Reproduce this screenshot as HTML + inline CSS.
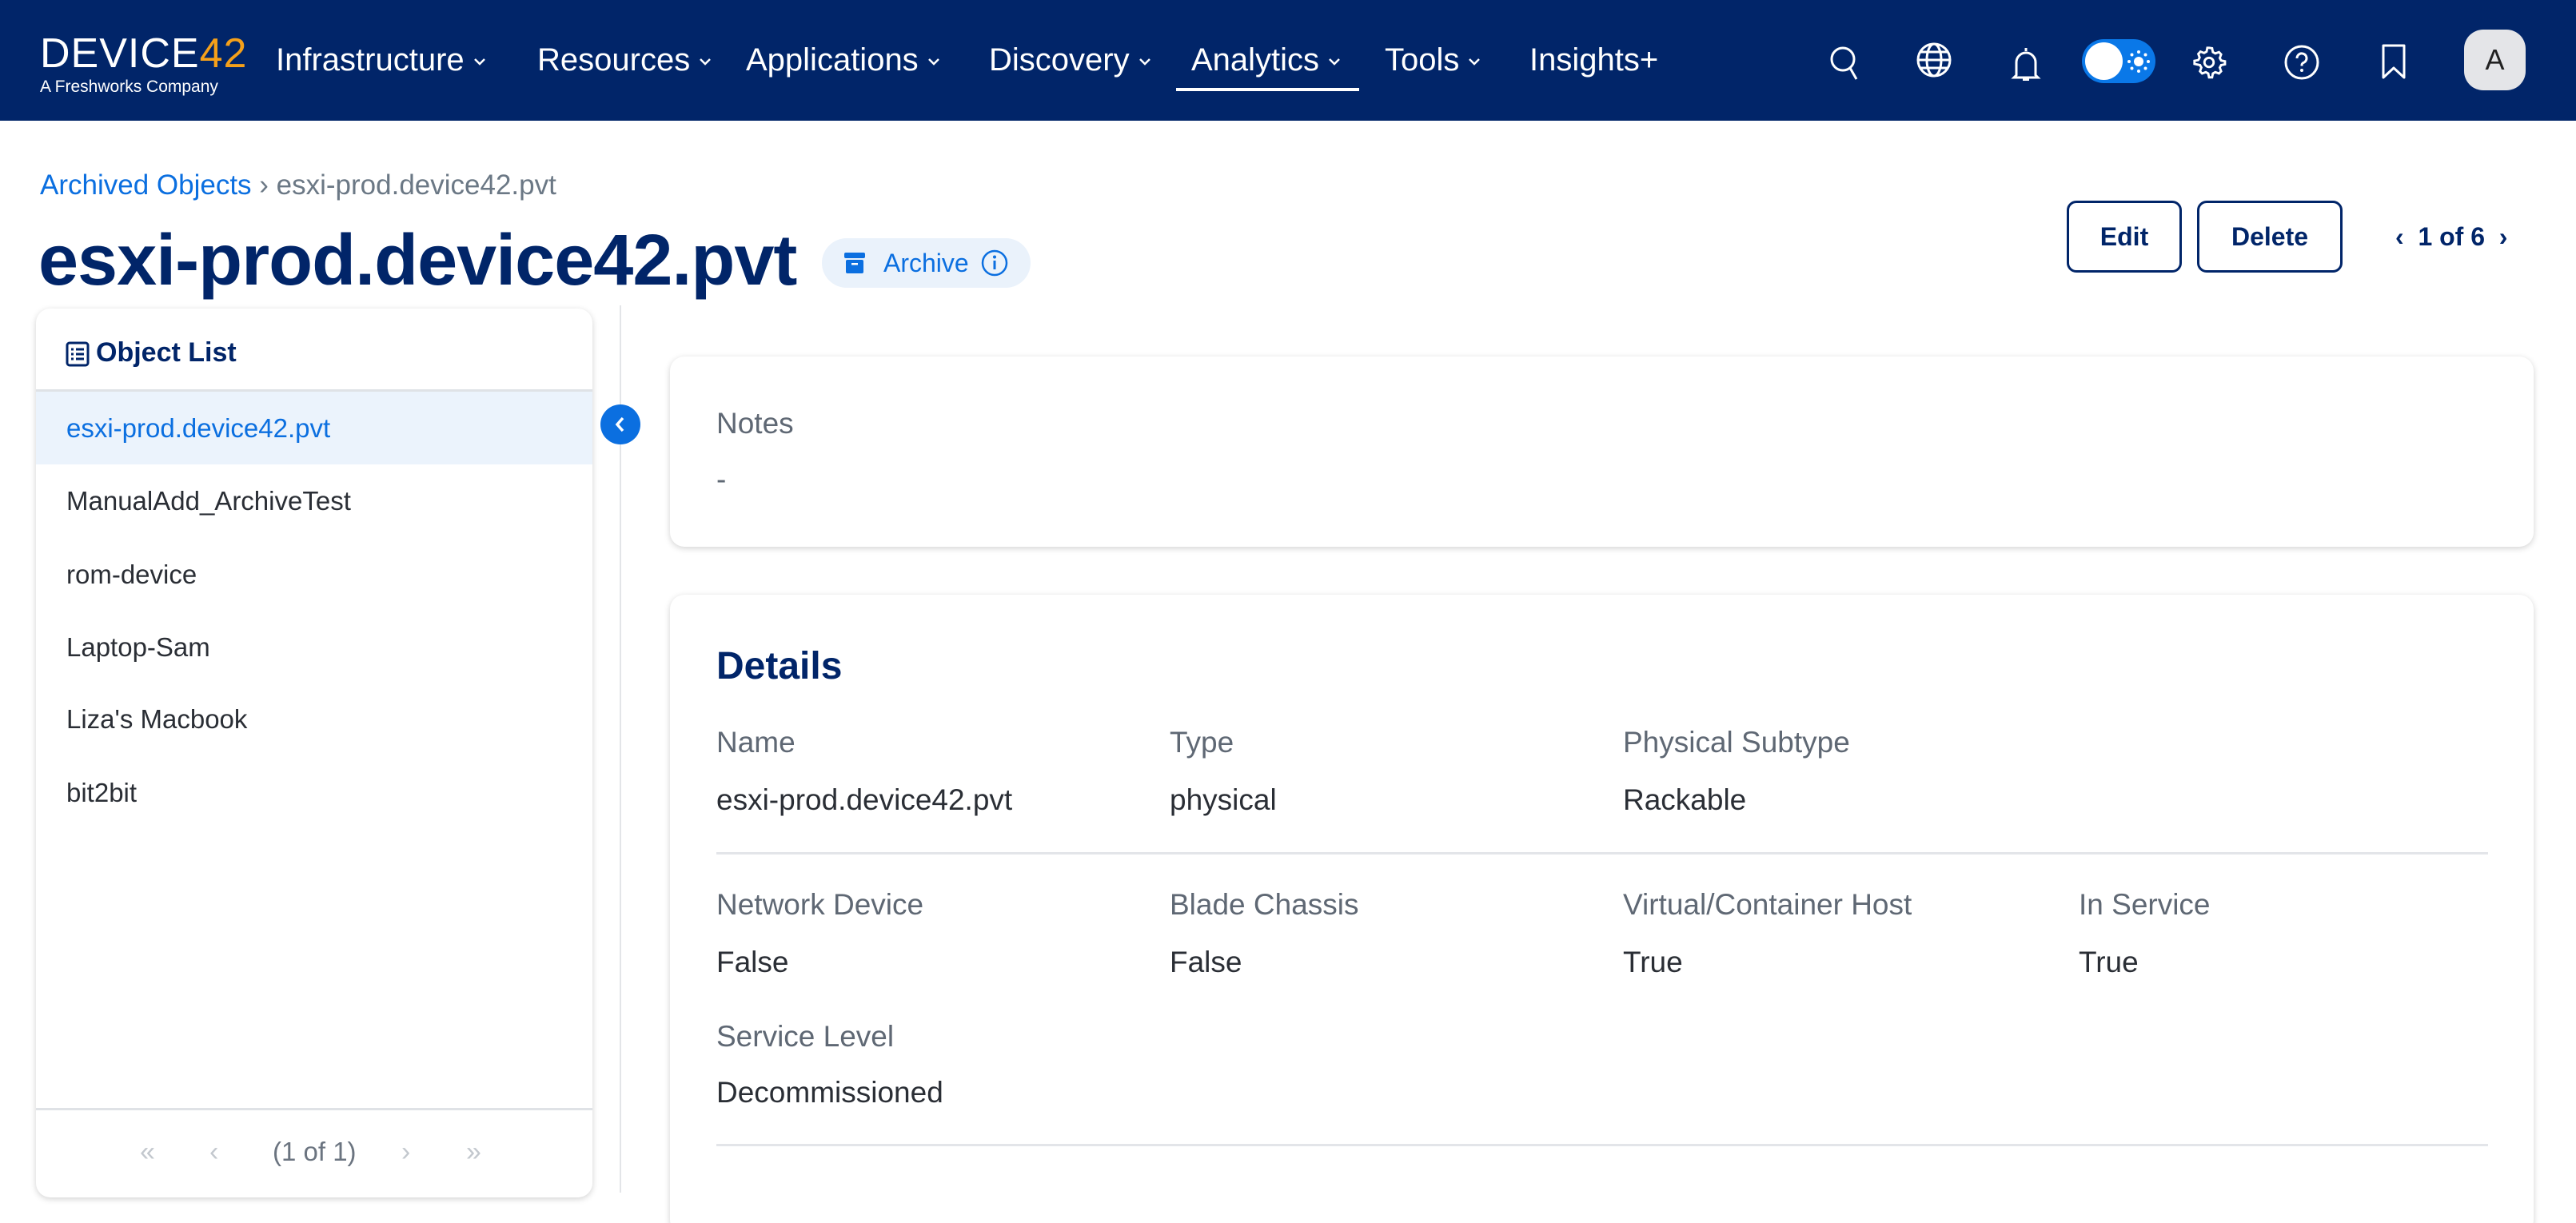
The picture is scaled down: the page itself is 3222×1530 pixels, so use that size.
<!DOCTYPE html>
<html><head><meta charset="utf-8"><style>
*{margin:0;padding:0;box-sizing:border-box}
html{overflow:hidden}
body{width:3222px;height:1530px;overflow:hidden;background:#fff;font-family:"Liberation Sans",sans-serif;position:relative}
.a{position:absolute;white-space:nowrap}
.nav{position:absolute;left:0;top:0;width:3222px;height:151px;background:#012569}
.ni{position:absolute;top:50px;color:#fff;font-size:40px;line-height:50px}
.ni svg{margin-left:10px;vertical-align:middle}
.ic{position:absolute;top:52px}
.card{position:absolute;background:#fff;border-radius:18px;box-shadow:0 2px 8px rgba(0,0,0,.18)}
.lbl{position:absolute;font-size:37px;color:#5f6874;line-height:44px}
.val{position:absolute;font-size:37px;color:#2a2e35;line-height:44px}
.li{position:absolute;left:83px;font-size:33px;color:#2a2e35;line-height:44px}
</style></head><body>
<div class="nav">
  <div class="a" style="left:50px;top:38px;color:#fff;font-size:52px;letter-spacing:1px;line-height:58px">DEVICE<span style="color:#f5a01a">42</span></div>
  <div class="a" style="left:50px;top:96px;color:#fff;font-size:21px;line-height:26px">A Freshworks Company</div>
  <div class="ni" style="left:345px">Infrastructure<svg width="18" height="12" viewBox="0 0 18 12"><path d="M3 3l6 6 6-6" stroke="#fff" stroke-width="2.5" fill="none"/></svg></div>
  <div class="ni" style="left:672px">Resources<svg width="18" height="12" viewBox="0 0 18 12"><path d="M3 3l6 6 6-6" stroke="#fff" stroke-width="2.5" fill="none"/></svg></div>
  <div class="ni" style="left:933px">Applications<svg width="18" height="12" viewBox="0 0 18 12"><path d="M3 3l6 6 6-6" stroke="#fff" stroke-width="2.5" fill="none"/></svg></div>
  <div class="ni" style="left:1237px">Discovery<svg width="18" height="12" viewBox="0 0 18 12"><path d="M3 3l6 6 6-6" stroke="#fff" stroke-width="2.5" fill="none"/></svg></div>
  <div class="ni" style="left:1490px">Analytics<svg width="18" height="12" viewBox="0 0 18 12"><path d="M3 3l6 6 6-6" stroke="#fff" stroke-width="2.5" fill="none"/></svg></div>
  <div class="a" style="left:1471px;top:110px;width:229px;height:4px;background:#fff"></div>
  <div class="ni" style="left:1732px">Tools<svg width="18" height="12" viewBox="0 0 18 12"><path d="M3 3l6 6 6-6" stroke="#fff" stroke-width="2.5" fill="none"/></svg></div>
  <div class="ni" style="left:1913px">Insights+</div>
  <svg class="ic" style="left:2285px" width="46" height="50" viewBox="0 0 46 50"><circle cx="20" cy="22" r="14" stroke="#fff" stroke-width="3" fill="none"/><path d="M29 33l8 14" stroke="#fff" stroke-width="3"/></svg>
  <svg class="ic" style="left:2396px" width="46" height="46" viewBox="0 0 46 46"><circle cx="23" cy="23" r="20" stroke="#fff" stroke-width="3" fill="none"/><ellipse cx="23" cy="23" rx="9" ry="20" stroke="#fff" stroke-width="3" fill="none"/><path d="M3 23h40M6 13h34M6 33h34" stroke="#fff" stroke-width="3"/></svg>
  <svg class="ic" style="left:2512px;top:56px" width="44" height="48" viewBox="0 0 44 48"><path d="M22 4v4M10 38V22a12 12 0 0 1 24 0v16l3 3H7z" stroke="#fff" stroke-width="3" fill="none"/><path d="M18 43h8" stroke="#fff" stroke-width="4"/></svg>
  <div class="a" style="left:2604px;top:49px;width:92px;height:55px;border-radius:28px;background:#0a78e8"></div>
  <div class="a" style="left:2608px;top:53px;width:47px;height:47px;border-radius:50%;background:#fff"></div>
  <svg class="a" style="left:2660px;top:62px" width="30" height="30" viewBox="0 0 30 30"><circle cx="15" cy="15" r="6" fill="#fff"/><g fill="#fff"><circle cx="15" cy="3" r="2"/><circle cx="15" cy="27" r="2"/><circle cx="3" cy="15" r="2"/><circle cx="27" cy="15" r="2"/><circle cx="6.5" cy="6.5" r="2"/><circle cx="23.5" cy="23.5" r="2"/><circle cx="6.5" cy="23.5" r="2"/><circle cx="23.5" cy="6.5" r="2"/></g></svg>
  <svg class="ic" style="left:2740px;top:55px" width="46" height="46" viewBox="0 0 24 24"><path d="M12 2.5l2 .3.5 2.5 1.6.9 2.4-.9 1.4 1.5-.9 2.4.9 1.6 2.5.5v2l-2.5.5-.9 1.6.9 2.4-1.4 1.5-2.4-.9-1.6.9-.5 2.5h-2l-.5-2.5-1.6-.9-2.4.9-1.4-1.5.9-2.4-.9-1.6L2.5 13v-2l2.5-.5.9-1.6-.9-2.4 1.4-1.5 2.4.9 1.6-.9.5-2.5z" stroke="#fff" stroke-width="1.5" fill="none"/><circle cx="12" cy="12" r="3" stroke="#fff" stroke-width="1.5" fill="none"/></svg>
  <svg class="ic" style="left:2856px;top:55px" width="46" height="46" viewBox="0 0 46 46"><circle cx="23" cy="23" r="20" stroke="#fff" stroke-width="3" fill="none"/><path d="M17 18a6 6 0 1 1 8 5.5c-2 1-2 2-2 4" stroke="#fff" stroke-width="3" fill="none"/><circle cx="23" cy="33" r="2" fill="#fff"/></svg>
  <svg class="ic" style="left:2978px;top:54px" width="34" height="46" viewBox="0 0 34 46"><path d="M3 3h26v40L16 31 3 43z" stroke="#fff" stroke-width="3" fill="none" stroke-linejoin="round"/></svg>
  <div class="a" style="left:3082px;top:37px;width:77px;height:76px;border-radius:24px;background:#e4e5e8;color:#222;font-size:36px;text-align:center;line-height:76px">A</div>
</div>

<div class="a" style="left:50px;top:211px;font-size:35px;line-height:42px;color:#0b6fe0">Archived Objects <span style="color:#6b7885">› esxi-prod.device42.pvt</span></div>
<div class="a" style="left:48px;top:274px;font-size:90px;font-weight:bold;color:#012569;line-height:104px;letter-spacing:-1px">esxi-prod.device42.pvt</div>
<div class="a" style="left:1028px;top:298px;width:261px;height:62px;border-radius:31px;background:#eaf2fb"></div>
<svg class="a" style="left:1054px;top:313px" width="30" height="32" viewBox="0 0 30 32"><rect x="2" y="3" width="26" height="7" rx="2" fill="#0b6fe0"/><rect x="4" y="12" width="22" height="17" rx="2" fill="#0b6fe0"/><rect x="11" y="16" width="8" height="2.5" fill="#fff"/></svg>
<div class="a" style="left:1105px;top:308px;font-size:32px;line-height:42px;color:#0b6fe0">Archive</div>
<svg class="a" style="left:1226px;top:311px" width="36" height="36" viewBox="0 0 36 36"><circle cx="18" cy="18" r="15" stroke="#0b6fe0" stroke-width="2.5" fill="none"/><path d="M18 15v11" stroke="#0b6fe0" stroke-width="3"/><circle cx="18" cy="10.5" r="2" fill="#0b6fe0"/></svg>

<div class="a" style="left:2585px;top:251px;width:144px;height:90px;border:3px solid #012569;border-radius:12px;font-size:32px;font-weight:bold;color:#012569;text-align:center;line-height:84px">Edit</div>
<div class="a" style="left:2748px;top:251px;width:182px;height:90px;border:3px solid #012569;border-radius:12px;font-size:32px;font-weight:bold;color:#012569;text-align:center;line-height:84px">Delete</div>
<div class="a" style="left:2996px;top:274px;font-size:32px;font-weight:bold;color:#012569;line-height:44px">‹&nbsp; 1 of 6 &nbsp;›</div>

<div class="card" style="left:45px;top:386px;width:696px;height:1112px">
  <svg class="a" style="left:37px;top:40px" width="30" height="34" viewBox="0 0 30 34"><rect x="2" y="3" width="26" height="28" rx="3" stroke="#012569" stroke-width="3" fill="none"/><path d="M7 11h3M13 11h10M7 17h3M13 17h10M7 23h3M13 23h10" stroke="#012569" stroke-width="3"/></svg>
  <div class="a" style="left:75px;top:30px;font-size:34px;font-weight:bold;color:#012569;line-height:50px">Object List</div>
  <div class="a" style="left:0;top:101px;width:696px;height:3px;background:#dfe2e6"></div>
  <div class="a" style="left:0;top:104px;width:696px;height:91px;background:#ebf3fc"></div>
  <div class="li" style="left:38px;top:128px;color:#0b6fe0">esxi-prod.device42.pvt</div>
  <div class="li" style="left:38px;top:219px">ManualAdd_ArchiveTest</div>
  <div class="li" style="left:38px;top:311px">rom-device</div>
  <div class="li" style="left:38px;top:402px">Laptop-Sam</div>
  <div class="li" style="left:38px;top:492px">Liza's Macbook</div>
  <div class="li" style="left:38px;top:584px">bit2bit</div>
  <div class="a" style="left:0;top:1000px;width:696px;height:3px;background:#dfe2e6"></div>
  <div class="a" style="left:130px;top:1033px;font-size:34px;line-height:44px;color:#c3c8ce">«</div>
  <div class="a" style="left:217px;top:1033px;font-size:34px;line-height:44px;color:#c3c8ce">‹</div>
  <div class="a" style="left:296px;top:1033px;font-size:33px;line-height:44px;color:#6b7480">(1 of 1)</div>
  <div class="a" style="left:457px;top:1033px;font-size:34px;line-height:44px;color:#c3c8ce">›</div>
  <div class="a" style="left:538px;top:1033px;font-size:34px;line-height:44px;color:#c3c8ce">»</div>
</div>
<div class="a" style="left:775px;top:382px;width:2px;height:1110px;background:#e3e5e8"></div>
<div class="a" style="left:751px;top:506px;width:50px;height:50px;border-radius:50%;background:#0b6fe0"></div>
<svg class="a" style="left:764px;top:517px" width="24" height="28" viewBox="0 0 24 28"><path d="M15 6l-7 8 7 8" stroke="#fff" stroke-width="3.5" fill="none"/></svg>

<div class="card" style="left:838px;top:446px;width:2331px;height:238px">
  <div class="lbl" style="left:58px;top:62px">Notes</div>
  <div class="val" style="left:58px;top:132px;color:#5f6874">-</div>
</div>
<div class="card" style="left:838px;top:744px;width:2331px;height:800px">
  <div class="a" style="left:58px;top:62px;font-size:48px;font-weight:bold;color:#012569;line-height:56px">Details</div>
  <div class="lbl" style="left:58px;top:163px">Name</div>
  <div class="lbl" style="left:625px;top:163px">Type</div>
  <div class="lbl" style="left:1192px;top:163px">Physical Subtype</div>
  <div class="val" style="left:58px;top:235px">esxi-prod.device42.pvt</div>
  <div class="val" style="left:625px;top:235px">physical</div>
  <div class="val" style="left:1192px;top:235px">Rackable</div>
  <div class="a" style="left:58px;top:322px;width:2216px;height:3px;background:#e3e5e9"></div>
  <div class="lbl" style="left:58px;top:366px">Network Device</div>
  <div class="lbl" style="left:625px;top:366px">Blade Chassis</div>
  <div class="lbl" style="left:1192px;top:366px">Virtual/Container Host</div>
  <div class="lbl" style="left:1762px;top:366px">In Service</div>
  <div class="val" style="left:58px;top:438px">False</div>
  <div class="val" style="left:625px;top:438px">False</div>
  <div class="val" style="left:1192px;top:438px">True</div>
  <div class="val" style="left:1762px;top:438px">True</div>
  <div class="lbl" style="left:58px;top:531px">Service Level</div>
  <div class="val" style="left:58px;top:601px">Decommissioned</div>
  <div class="a" style="left:58px;top:687px;width:2216px;height:3px;background:#e3e5e9"></div>
</div>
</body></html>
